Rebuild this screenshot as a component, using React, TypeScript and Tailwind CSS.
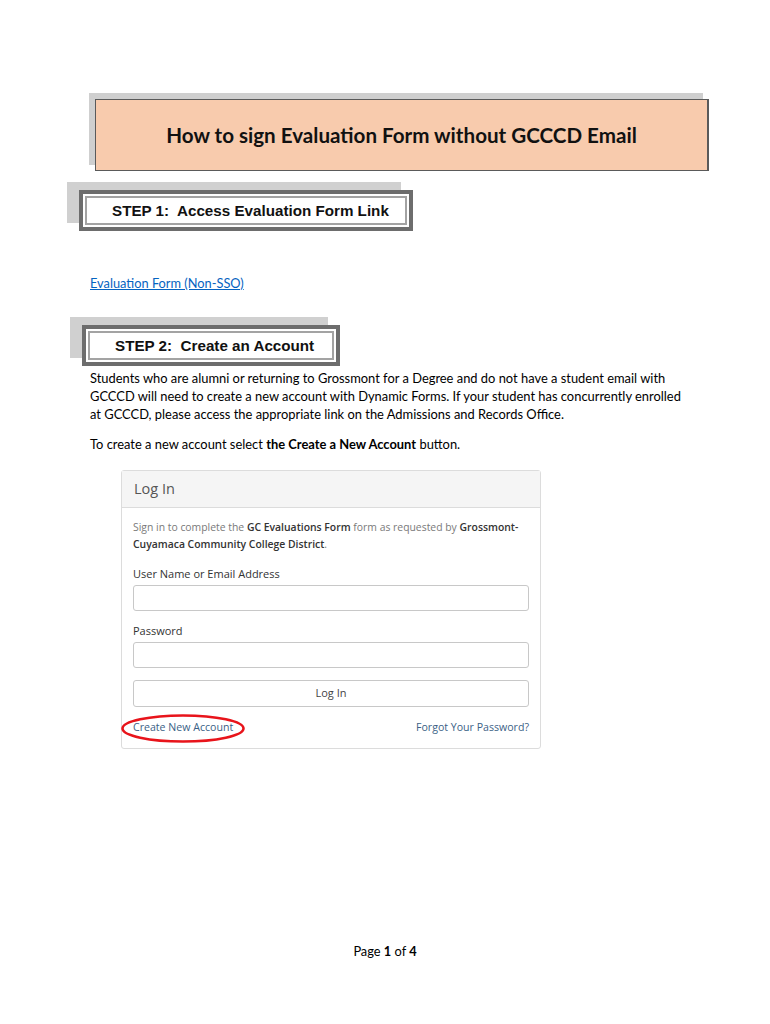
import React from 'react';

const calibri = { fontFamily: 'Lato, "Open Sans", sans-serif' };

const StepBox = ({ label, width }: { label: string; width: string }) => (
 <div
  className={`${width} border-[4px] border-[#6d6d6d] bg-white p-[2px] shadow-[-12px_-8px_0_0_#d0d0d0]`}
 >
  <div className="flex h-[29px] items-center border-2 border-[#a3a3a3] bg-white">
   <span className="whitespace-pre pl-[25px] pt-[1px] font-['Liberation_Sans',Arial,sans-serif] text-[15.2px] font-bold text-[#111]">
    {label}
   </span>
  </div>
 </div>
);

const LoginPanel = () => (
 <div className="relative ml-[121px] w-[420px] rounded-[3px] border border-[#dcdcdc] bg-white font-['Open_Sans',sans-serif]">
  <div className="flex h-[37px] items-center border-b border-[#dcdcdc] bg-[#f5f5f5] px-3 text-[14.5px] text-[#555]">
   Log In
  </div>
  <div className="px-[11px] pb-[12px] pt-[11px]">
   <p className="text-[10.4px] leading-[17px] text-[#7a7a7a]">
    Sign in to complete the <b className="font-semibold text-[#333]">GC Evaluations Form</b> form as requested by{' '}
    <b className="font-semibold text-[#333]">Grossmont-Cuyamaca Community College District</b>.
   </p>
   <div className="mt-[12px] text-[11px] leading-[17px] text-[#333]">User Name or Email Address</div>
   <div className="mt-[3px] h-[26px] w-[396px] rounded-[3px] border border-[#c8c8c8]" />
   <div className="mt-[11px] text-[11px] leading-[17px] text-[#333]">Password</div>
   <div className="mt-[3px] h-[26px] w-[396px] rounded-[3px] border border-[#c8c8c8]" />
   <div className="mt-[12px] flex h-[27px] w-[396px] items-center justify-center rounded-[3px] border border-[#c8c8c8] text-[11px] text-[#444]">
    Log In
   </div>
   <div className="mt-[12px] flex w-[396px] justify-between text-[10.6px] leading-[17px] text-[#3b5f86]">
    <span>Create New Account</span>
    <span>Forgot Your Password?</span>
   </div>
  </div>
  <svg
   className="pointer-events-none absolute left-[-2px] top-[242px]"
   width="126"
   height="31"
   viewBox="0 0 126 31"
  >
   <ellipse cx="63" cy="15.5" rx="60.5" ry="13" fill="none" stroke="#e8141b" strokeWidth="2.6" />
  </svg>
 </div>
);

export default function App() {
 return (
  <div className="min-h-[1024px] w-[770px] bg-white text-black" style={calibri}>
   <div className="pt-[99px]">
    <div className="ml-[95px] flex h-[72px] w-[614px] items-center justify-center border border-r-2 border-[#5a5a5a] bg-[#f8cbad] shadow-[-6px_-6px_0_0_#cfcfcf]">
     <span className="text-[20.6px] font-bold text-[#111]">How to sign Evaluation Form without GCCCD Email</span>
    </div>
   </div>

   <div className="ml-[79px] mt-[19px]">
    <StepBox label="STEP 1:  Access Evaluation Form Link" width="w-[334px]" />
   </div>

   <div className="ml-[90px] mt-[43px] text-[12.8px] leading-[18px]">
    <a href="#" className="text-[#0563c1] underline">
     Evaluation Form (Non-SSO)
    </a>
   </div>

   <div className="ml-[82px] mt-[33px]">
    <StepBox label="STEP 2:  Create an Account" width="w-[258px]" />
   </div>

   <div className="ml-[90px] mt-[3px] w-[600px] text-[12.9px] leading-[18px]">
    <p>
     Students who are alumni or returning to Grossmont for a Degree and do not have a student email with
     GCCCD will need to create a new account with Dynamic Forms. If your student has concurrently enrolled
     at GCCCD, please access the appropriate link on the Admissions and Records Office.
    </p>
    <p className="mt-[12px]">
     To create a new account select <span className="font-bold">the Create a New Account</span> button.
    </p>
   </div>

   <div className="mt-[17px]">
    <LoginPanel />
   </div>

   <div className="mt-[193px] text-center text-[12.8px] leading-[18px]">
    <span>
     Page <span className="font-bold">1</span> of <span className="font-bold">4</span>
    </span>
   </div>
  </div>
 );
}
